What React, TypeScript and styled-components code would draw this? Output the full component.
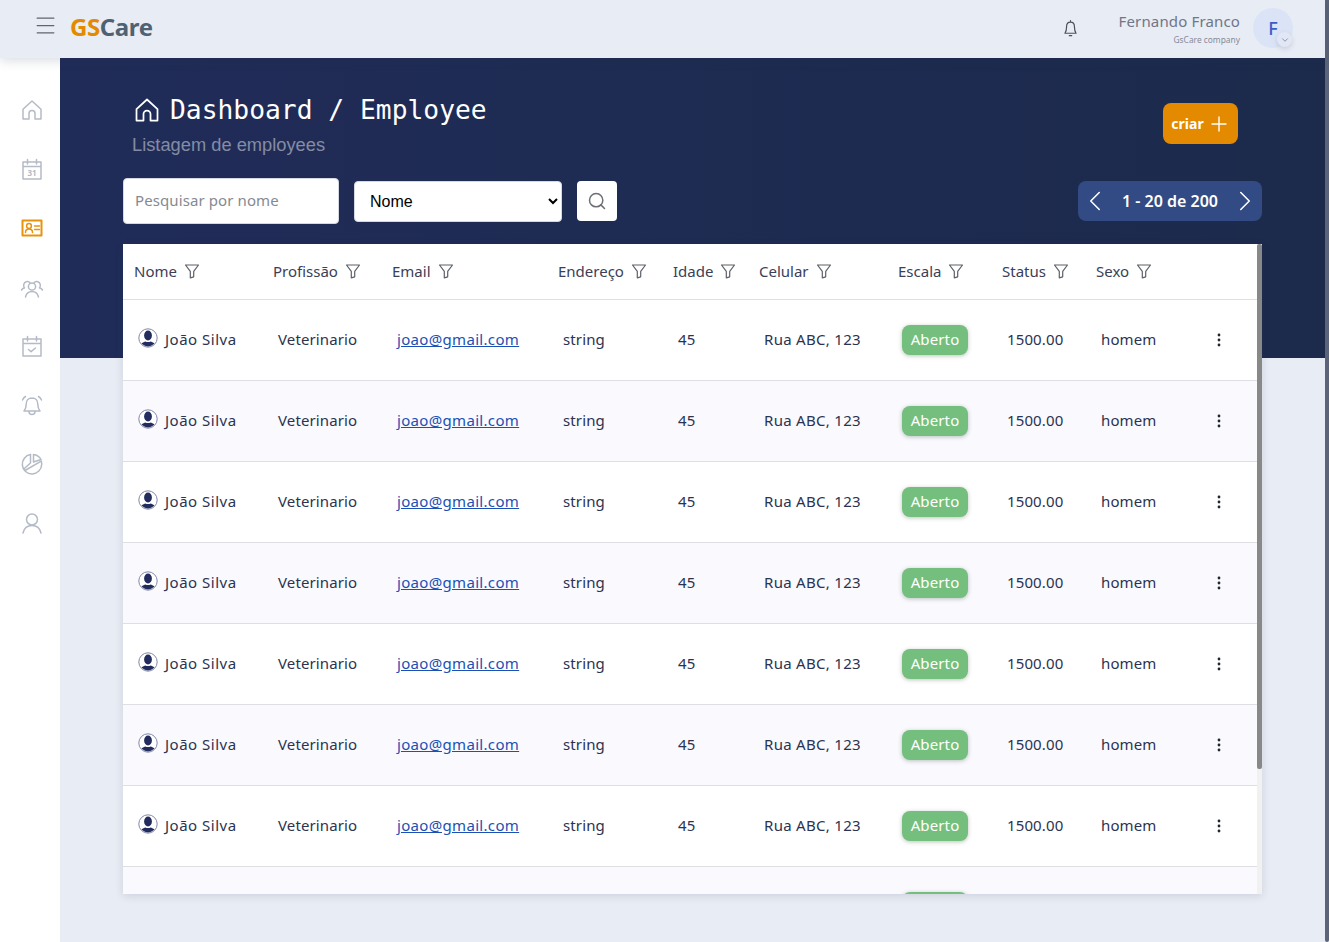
import React from 'react';
import styled, { createGlobalStyle } from 'styled-components';
import { ChevronDown, ChevronLeft, ChevronRight, Menu, Plus, Search } from 'lucide-react';

const GlobalStyle = createGlobalStyle`
  * { box-sizing: border-box; }
  html, body { height: 100%; }
  body {
    margin: 0;
    overflow: hidden;
    background: #e8ecf4;
    font-family: 'Noto Sans', sans-serif;
    color: #2b3350;
  }
`;

const Page = styled.div`
  display: flex;
  height: 942px;
  overflow: hidden;
`;

const PageScrollbar = styled.div`
  flex: 0 0 4px;
  background: #5b6478;
  border-radius: 0 0 2px 2px;
`;

const Shell = styled.div`
  flex: 1;
  min-width: 0;
  display: flex;
  flex-direction: column;
`;

const Header = styled.header`
  position: relative;
  z-index: 2;
  flex: 0 0 58px;
  display: flex;
  align-items: center;
  padding: 0 32px 0 33px;
  background: #e8ecf4;
  box-shadow: 0 3px 10px rgba(40, 50, 80, 0.16);
`;

const MenuButton = styled.span`
  display: flex;
  color: #5f6670;
  margin: 0 12px 7px 0;
`;

const Logo = styled.div`
  font-family: 'Noto Sans', sans-serif;
  font-size: 24px;
  font-weight: 700;
  letter-spacing: -0.4px;
  color: #4f6272;
  margin-bottom: 6px;
  span { color: #e38a00; }
`;

const HeaderRight = styled.div`
  margin: 0 0 2px auto;
  display: flex;
  align-items: center;
`;

const Bell = styled.span`
  display: flex;
  color: #4a4f58;
  margin-right: 39px;
`;

const UserInfo = styled.div`
  text-align: right;
  margin-right: 13px;
`;

const UserName = styled.div`
  font-size: 15px;
  line-height: 20px;
  letter-spacing: 0.15px;
  color: #6f7688;
`;

const UserCompany = styled.div`
  font-size: 8.4px;
  line-height: 12px;
  margin-top: 3px;
  color: #868b98;
`;

const Avatar = styled.div`
  position: relative;
  width: 40px;
  height: 40px;
  border-radius: 50%;
  background: #dbe4f6;
  color: #3d5cc4;
  font-size: 18px;
  font-weight: 500;
  display: flex;
  align-items: center;
  justify-content: center;
`;

const AvatarChip = styled.span`
  position: absolute;
  right: 1px;
  bottom: 1px;
  width: 15px;
  height: 15px;
  border-radius: 50%;
  background: #e1e7f5;
  color: #7c8494;
  display: flex;
  align-items: center;
  justify-content: center;
  box-shadow: 0 2px 5px rgba(60, 70, 100, 0.18);
`;

const Body = styled.div`
  flex: 1;
  display: flex;
  min-height: 0;
`;

const Sidebar = styled.nav`
  flex: 0 0 60px;
  background: #fff;
  padding: 40px 0 0 4px;
  display: flex;
  flex-direction: column;
  align-items: center;
  gap: 35px;
`;

const SideItem = styled.span<{ $active?: boolean }>`
  width: 24px;
  height: 24px;
  display: flex;
  color: ${(p) => (p.$active ? '#e8930c' : '#b4bac6')};
`;

const Main = styled.main`
  flex: 1;
  min-width: 0;
  padding: 0 63px;
  background: linear-gradient(90deg, #202c58, #1c2a4c) no-repeat top / 100% 300px;
`;

const TitleRow = styled.div`
  display: flex;
  justify-content: space-between;
  height: 120px;
  padding: 37px 24px 0 10px;
`;

const Title = styled.h1`
  margin: 0;
  display: flex;
  align-items: center;
  gap: 9px;
  height: 30px;
  color: #fff;
  font-family: 'DejaVu Sans Mono', monospace;
  font-size: 26.3px;
  font-weight: 400;
  white-space: pre;
`;

const Subtitle = styled.div`
  margin: 9px 0 0 -1px;
  font-family: 'Liberation Sans', sans-serif;
  font-size: 18.3px;
  line-height: 22px;
  color: #848ca4;
`;

const CreateButton = styled.button`
  width: 75px;
  height: 41px;
  margin-top: 8px;
  border: none;
  border-radius: 8px;
  background: #e38a00;
  color: #fff;
  font-family: 'Noto Sans', sans-serif;
  font-size: 14px;
  font-weight: 700;
  display: flex;
  align-items: center;
  justify-content: center;
  gap: 3px;
  padding: 0 0 0 1px;
`;

const Toolbar = styled.div`
  display: flex;
  align-items: flex-start;
  height: 66px;
`;

const SearchInput = styled.input`
  width: 216px;
  height: 46px;
  padding: 0 11px 2px;
  border: 1px solid #d5d8e0;
  border-radius: 4px;
  background: #fff;
  font-family: 'Noto Sans', sans-serif;
  font-size: 15px;
  letter-spacing: 0.1px;
  outline: none;
  &::placeholder { color: #858a92; opacity: 1; }
`;

const FieldSelect = styled.select`
  width: 208px;
  height: 41px;
  margin: 3px 15px 0;
  padding: 0 11px;
  border: 1px solid #d5d8e0;
  border-radius: 4px;
  background: #fff;
  color: #000;
  font-family: 'Liberation Sans', sans-serif;
  font-size: 16px;
`;

const SearchButton = styled.button`
  width: 40px;
  height: 40px;
  margin-top: 3px;
  padding: 0;
  border: none;
  border-radius: 4px;
  background: #fff;
  color: #6c6f73;
  display: flex;
  align-items: center;
  justify-content: center;
`;

const Pager = styled.div`
  margin: 3px 0 0 auto;
  width: 184px;
  height: 40px;
  border-radius: 8px;
  background: #324b84;
  color: #fff;
  font-size: 16px;
  font-weight: 600;
  display: flex;
  align-items: center;
  justify-content: space-between;
`;

const TableCard = styled.section`
  position: relative;
  height: 650px;
  padding-right: 5px;
  background: #fff;
  overflow: hidden;
  box-shadow: 0 2px 8px rgba(40, 50, 80, 0.14);
`;

const ScrollTrack = styled.div`
  position: absolute;
  top: 0;
  right: 0;
  width: 5px;
  height: 100%;
  background: #f1f1f1;
`;

const ScrollThumb = styled.div`
  height: 525px;
  border-radius: 2px;
  background: #888;
`;

const columns = '139px 119px 166px 115px 86px 139px 104px 94px 100px 72px';

const HeadRow = styled.div`
  display: grid;
  grid-template-columns: ${columns};
  height: 56px;
  padding-bottom: 1px;
  border-bottom: 1px solid #dedfe3;
  align-items: center;
`;

const HeadCell = styled.div`
  display: flex;
  align-items: center;
  gap: 7px;
  padding-left: 11px;
  font-size: 15px;
  color: #3a4058;
  svg { color: #5c6068; }
`;

const Row = styled.div<{ $striped: boolean }>`
  display: grid;
  grid-template-columns: ${columns};
  height: 81px;
  border-bottom: 1px solid #dedfe3;
  align-items: center;
  background: ${(p) => (p.$striped ? '#f9f9fe' : '#fff')};
`;

const Cell = styled.div`
  padding: 0 0 2px 16px;
  font-size: 15px;
  letter-spacing: 0.12px;
  color: #2b3350;
  white-space: nowrap;
`;

const NameCell = styled(Cell)`
  display: flex;
  align-items: center;
  gap: 7px;
  padding-left: 15px;
  letter-spacing: 0.5px;
  svg { margin-top: -2px; }
`;

const AddressCell = styled(Cell)`
  letter-spacing: 0.3px;
`;

const BadgeCell = styled(Cell)`
  padding-bottom: 0;
`;

const MailLink = styled.a`
  color: #1c50b4;
  letter-spacing: 0.32px;
  text-decoration: underline;
`;

const Badge = styled.span`
  display: inline-flex;
  align-items: center;
  justify-content: center;
  width: 66px;
  height: 30px;
  margin-left: -1px;
  padding-bottom: 2px;
  border-radius: 8px;
  background: #74bf7d;
  color: #fff;
  font-size: 15px;
  box-shadow: 0 1px 4px rgba(30, 60, 40, 0.3);
`;

const ActionCell = styled.div`
  display: flex;
  justify-content: center;
  padding-right: 4px;
  color: #23262e;
`;

type IconProps = { size?: number };

const Line = ({ size = 24, children }: IconProps & { children: React.ReactNode }) => (
  <svg width={size} height={size} viewBox="0 0 24 24" fill="none" stroke="currentColor" strokeWidth="1.5" strokeLinecap="round" strokeLinejoin="round">
    {children}
  </svg>
);

const HomeIcon = ({ size }: IconProps) => (
  <Line size={size}>
    <path d="M3 11.2 12 3l9 8.2V21h-6v-5.5a3 3 0 0 0-6 0V21H3z" />
  </Line>
);

const CalendarIcon = () => (
  <Line>
    <path d="M3 5h18v17H3zM3 9.5h18M7.5 2.5v4.5M16.5 2.5V7" />
    <text x="12" y="19" textAnchor="middle" fontSize="8" fontWeight="700" fill="currentColor" stroke="none" fontFamily="Noto Sans">31</text>
  </Line>
);

const ContactIcon = () => (
  <Line>
    <path d="M2.5 4.5h19v15h-19z" strokeWidth="2" />
    <circle cx="9" cy="10" r="2.4" />
    <path d="M5.5 16.500c0-2 1.400-3.400 3.500-3.400s3.500 1.400 3.500 3.400M14.500 10h5M14.500 13.500h5" />
  </Line>
);

const TeamIcon = () => (
  <Line>
    <circle cx="12" cy="11.500" r="3.600" />
    <path d="M5.500 22c.8-3.600 3.300-5.600 6.500-5.600s5.700 2 6.500 5.600M4.500 13C2.800 11 3.500 7 7 6.500c1.500-.2 2.500.5 3 1.500M19.500 13c1.700-2 1-6-2.500-6.500-1.500-.2-2.500.5-3 1.500M1.500 15c.7-1.200 1.500-1.800 3-2.200M22.500 15c-.7-1.200-1.500-1.800-3-2.200" />
  </Line>
);

const CheckCalendarIcon = () => (
  <Line>
    <path d="M3 5h18v17H3zM3 9.500h18M7.500 2.500V7M16.500 2.500V7M8.500 15.500l2.500 2.200 4.500-3.700" />
  </Line>
);

const AlarmIcon = () => (
  <Line>
    <path d="M12 5c-3.800 0-5.800 2.800-5.800 6.200 0 3.300-.7 5-2.200 6.800h16c-1.500-1.800-2.200-3.500-2.200-6.800C17.800 7.800 15.800 5 12 5zM9 18.500c0 4 6 4 6 0M2.500 7c.7-1.500 1.700-2.700 3-3.500M21.500 7c-.7-1.500-1.700-2.700-3-3.500" />
  </Line>
);

const PieIcon = () => (
  <Line>
    <path d="M10.500 2.600A9.700 9.700 0 1 0 21.700 12.500a9 9 0 0 0-.5-3.300" />
    <path d="M10.500 2.600V11L3.800 17M13.500 2.500a9.700 9.700 0 0 1 7.500 5L13.500 10z" />
    <path d="M5 18.500 21.200 9.200" />
  </Line>
);

const UserIcon = () => (
  <Line>
    <circle cx="12" cy="8.500" r="5.500" />
    <path d="M3 22c1-4.500 4.500-7.500 9-7.500s8 3 9 7.500" />
  </Line>
);

const BellIcon = () => (
  <Line size={19}>
    <path d="M12 4c-3.500 0-5 2.800-5 6 0 4-.7 6-2 8h14c-1.300-2-2-4-2-8 0-3.200-1.500-6-5-6zM12 2v2M10.500 21h3" />
  </Line>
);

const FilterIcon = () => (
  <svg width="16" height="16" viewBox="0 0 16 16" fill="none" stroke="currentColor" strokeWidth="1.2" strokeLinejoin="round">
    <path d="M1.500 2h13L9.700 8.300v5.500l-3.400 1V8.300z" />
  </svg>
);

const PersonAvatar = () => (
  <svg width="20" height="20" viewBox="0 0 20 20">
    <defs>
      <clipPath id="avatar-clip">
        <circle cx="10" cy="10" r="8.400" />
      </clipPath>
    </defs>
    <circle cx="10" cy="10" r="9.200" fill="#fff" stroke="#8088a8" strokeWidth="1" />
    <g clipPath="url(#avatar-clip)" fill="#232c5e">
      <ellipse cx="10" cy="7.500" rx="3.900" ry="5" />
      <path d="M1 20c0-4.500 4-5.500 6.500-6.500 1 .8 4 .8 5 0C15 14.500 19 15.500 19 20z" />
    </g>
  </svg>
);

const DotsIcon = () => (
  <svg width="4" height="14" viewBox="0 0 4 14" fill="currentColor">
    <circle cx="2" cy="2" r="1.400" />
    <circle cx="2" cy="7" r="1.400" />
    <circle cx="2" cy="12" r="1.400" />
  </svg>
);

const headers = ['Nome', 'Profissão', 'Email', 'Endereço', 'Idade', 'Celular', 'Escala', 'Status', 'Sexo'];
const sideIcons = [HomeIcon, CalendarIcon, ContactIcon, TeamIcon, CheckCalendarIcon, AlarmIcon, PieIcon, UserIcon];
const rows = Array.from({ length: 8 }, (_, i) => i);

function App() {
  return (
    <>
      <GlobalStyle />
      <Page>
        <Shell>
          <Header>
            <MenuButton>
              <Menu size={25} strokeWidth={1.2} />
            </MenuButton>
            <Logo>
              <span>GS</span>Care
            </Logo>
            <HeaderRight>
              <Bell>
                <BellIcon />
              </Bell>
              <UserInfo>
                <UserName>Fernando Franco</UserName>
                <UserCompany>GsCare company</UserCompany>
              </UserInfo>
              <Avatar>
                F
                <AvatarChip>
                  <ChevronDown size={10} />
                </AvatarChip>
              </Avatar>
            </HeaderRight>
          </Header>
          <Body>
            <Sidebar>
              {sideIcons.map((Icon, i) => (
                <SideItem key={i} $active={i === 2}>
                  <Icon />
                </SideItem>
              ))}
            </Sidebar>
            <Main>
              <TitleRow>
                <div>
                  <Title>
                    <HomeIcon size={28} />
                    {'Dashboard / Employee'}
                  </Title>
                  <Subtitle>Listagem de employees</Subtitle>
                </div>
                <CreateButton>
                  criar
                  <Plus size={24} strokeWidth={1.4} />
                </CreateButton>
              </TitleRow>
              <Toolbar>
                <SearchInput placeholder="Pesquisar por nome" />
                <FieldSelect defaultValue="Nome">
                  <option>Nome</option>
                </FieldSelect>
                <SearchButton>
                  <Search size={20} strokeWidth={1.8} />
                </SearchButton>
                <Pager>
                  <ChevronLeft size={34} strokeWidth={1.1} />
                  1 - 20 de 200
                  <ChevronRight size={34} strokeWidth={1.1} />
                </Pager>
              </Toolbar>
              <TableCard>
                <HeadRow>
                  {headers.map((title) => (
                    <HeadCell key={title}>
                      {title}
                      <FilterIcon />
                    </HeadCell>
                  ))}
                </HeadRow>
                {rows.map((i) => (
                  <Row key={i} $striped={i % 2 === 1}>
                    <NameCell>
                      <PersonAvatar />
                      João Silva
                    </NameCell>
                    <Cell>Veterinario</Cell>
                    <Cell>
                      <MailLink href="#">joao@gmail.com</MailLink>
                    </Cell>
                    <Cell>string</Cell>
                    <Cell>45</Cell>
                    <AddressCell>Rua ABC, 123</AddressCell>
                    <BadgeCell>
                      <Badge>Aberto</Badge>
                    </BadgeCell>
                    <Cell>1500.00</Cell>
                    <Cell>homem</Cell>
                    <ActionCell>
                      <DotsIcon />
                    </ActionCell>
                  </Row>
                ))}
                <ScrollTrack>
                  <ScrollThumb />
                </ScrollTrack>
              </TableCard>
            </Main>
          </Body>
        </Shell>
        <PageScrollbar />
      </Page>
    </>
  );
}

export default App;
